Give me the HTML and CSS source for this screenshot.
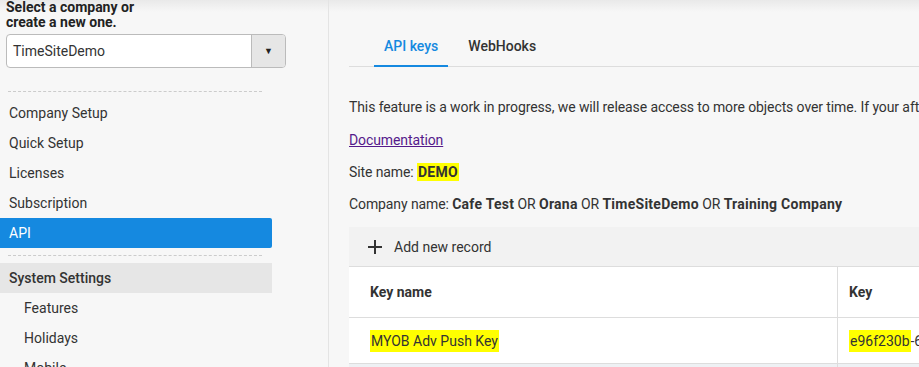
FILE: index.html
```html
<!DOCTYPE html>
<html lang="en">
  <head>
    <meta charset="UTF-8" />
    <meta name="viewport" content="width=device-width, initial-scale=1.0" />
    <title>API</title>
    <link rel="stylesheet" href="styles.css">
  </head>
  <body>
    <div class="layout">
      <div class="sidebar">
        <div class="company-pick">
          <h4>Select a company or<br />create a new one.</h4>
          <div class="select">
            <span class="select-value">TimeSiteDemo</span>
            <span class="select-btn">&#9660;</span>
          </div>
        </div>
        <div class="dash"></div>
        <ul class="menu">
          <li>Company Setup</li>
          <li>Quick Setup</li>
          <li>Licenses</li>
          <li>Subscription</li>
          <li class="active">API</li>
        </ul>
        <div class="dash dash-tight"></div>
        <div class="menu-group">System Settings</div>
        <ul class="menu sub">
          <li>Features</li>
          <li>Holidays</li>
          <li>Mobile</li>
        </ul>
      </div>

      <div class="main">
        <div class="tabs">
          <div class="tab selected">API keys</div>
          <div class="tab">WebHooks</div>
        </div>

        <p class="intro">This feature is a work in progress, we will release access to more objects over time. If your after something specific please let us know.</p>
        <p class="doc"><a href="#" class="doc-link">Documentation</a></p>
        <p>Site name: <b class="mark">DEMO</b></p>
        <p>Company name: <b>Cafe Test</b> OR <b>Orana</b> OR <b>TimeSiteDemo</b> OR <b>Training Company</b></p>

        <div class="grid">
          <div class="toolbar">
            <svg class="plus" width="14" height="14" viewBox="0 0 14 14">
              <path d="M7 0v14M0 7h14" stroke="#333" stroke-width="2" />
            </svg>
            <span>Add new record</span>
          </div>
          <table>
            <thead>
              <tr>
                <th class="col-name">Key name</th>
                <th class="col-key">Key</th>
              </tr>
            </thead>
            <tbody>
              <tr>
                <td><span class="mark cell-mark">MYOB Adv Push Key</span></td>
                <td class="col-key"><span class="mark cell-mark">e96f230b</span>-6a1c-4f2e-9b7d-3c5e8a0d1f42</td>
              </tr>
              <tr class="alt">
                <td>&nbsp;</td>
                <td class="col-key">&nbsp;</td>
              </tr>
            </tbody>
          </table>
        </div>
      </div>
    </div>
  </body>
</html>
```

FILE: styles.css
```css
html, body {
  height: 100%;
}
body {
  margin: 0;
  font-family: Roboto, "Liberation Sans", sans-serif;
  font-size: 14px;
  color: #333;
  background: linear-gradient(#e9e9e9, #f7f7f7 12px);
  overflow: hidden;
}
.layout {
  display: flex;
  height: 100%;
}
.sidebar {
  width: 328px;
  flex: none;
  border-right: 1px solid #e4e4e4;
}
.company-pick {
  padding: 0 6px;
}
.company-pick h4 {
  margin: 0;
  font-size: 14px;
  font-weight: bold;
  line-height: 15px;
  color: #222;
}
.select {
  display: flex;
  width: 278px;
  height: 32px;
  margin-top: 4px;
  border: 1px solid #bbb;
  border-radius: 4px;
  background: #fff;
  overflow: hidden;
}
.select-value {
  flex: 1;
  padding-left: 6px;
  line-height: 32px;
}
.select-btn {
  width: 33px;
  border-left: 1px solid #bbb;
  background: #e6e6e6;
  text-align: center;
  line-height: 32px;
  font-size: 9px;
  color: #222;
}
.dash {
  margin: 23px 0 0 8px;
  width: 254px;
  border-top: 1px dashed #ccc;
}
.dash-tight {
  margin-top: 7px;
}
.menu {
  list-style: none;
  margin: 6px 0 0;
  padding: 0;
  width: 272px;
}
.menu li {
  height: 30px;
  line-height: 30px;
  padding-left: 9px;
}
.menu li.active {
  background: #1589e0;
  color: #fff;
  border-radius: 0 2px 2px 0;
}
.menu-group {
  width: 263px;
  margin-top: 7px;
  height: 30px;
  line-height: 30px;
  padding-left: 9px;
  background: #e6e6e6;
  font-weight: 500;
}
.menu.sub {
  margin-top: 0;
}
.menu.sub li {
  padding-left: 24px;
}
.main {
  flex: 1;
  min-width: 0;
  padding: 26px 0 0 20px;
}
.tabs {
  display: flex;
  gap: 10px;
  padding-left: 25px;
  border-bottom: 1px solid #ddd;
}
.tab {
  height: 39px;
  line-height: 40px;
  padding: 0 10px;
  font-weight: 500;
  border-bottom: 2px solid transparent;
  margin-bottom: -1px;
}
.tab.selected {
  color: #1589e0;
  border-bottom-color: #1589e0;
}
.main p {
  margin: 12px 0 0;
  line-height: 20px;
  white-space: nowrap;
  letter-spacing: -0.1px;
}
.main p.intro {
  margin-top: 30px;
}
.main p.doc {
  margin-top: 13px;
}
.doc-link {
  color: #551a8b;
}
.main b {
  font-weight: bold;
  letter-spacing: 0.25px;
}
.mark {
  background: #ffff00;
  padding: 1px;
}
.cell-mark {
  padding: 3px 1px;
}
.grid {
  margin-top: 13px;
  width: 900px;
}
.toolbar {
  display: flex;
  align-items: center;
  gap: 12px;
  height: 39px;
  padding-left: 19px;
  background: #f2f2f2;
}
table {
  width: 100%;
  border-collapse: collapse;
  background: #fff;
}
th, td {
  text-align: left;
  padding: 0 16px 0 21px;
  border: 1px solid #ddd;
  border-left: none;
}
th {
  height: 50px;
  font-weight: bold;
}
td {
  height: 45px;
  white-space: nowrap;
}
.col-name {
  width: 451px;
}
th.col-key, td.col-key {
  padding-left: 11px;
}
tr.alt td {
  background: #eef1f4;
}
```
